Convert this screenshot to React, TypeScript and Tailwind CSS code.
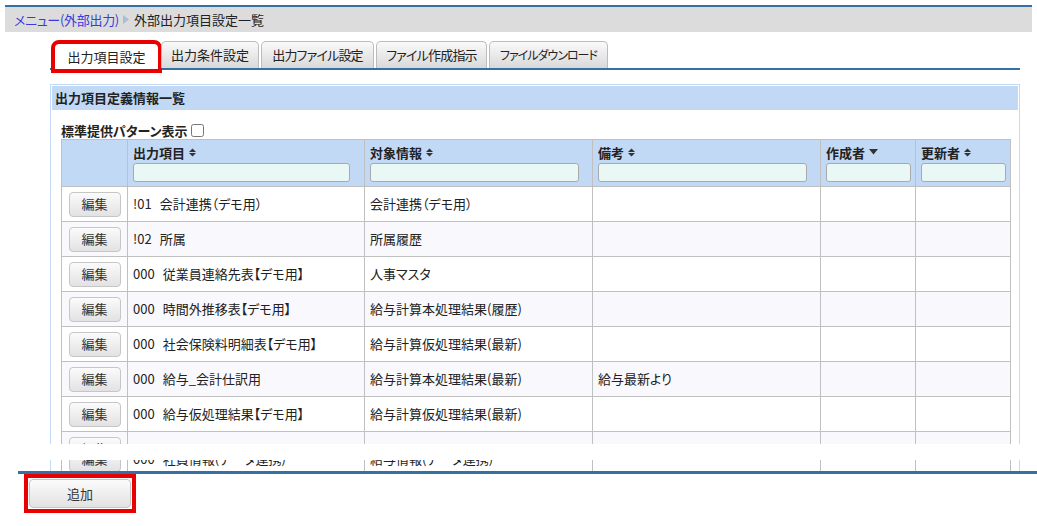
import React from "react";

const rows = [
  { code: "!01", name: "会計連携（デモ用）", target: "会計連携（デモ用）", note: "" },
  { code: "!02", name: "所属", target: "所属履歴", note: "" },
  { code: "000", name: "従業員連絡先表【デモ用】", target: "人事マスタ", note: "" },
  { code: "000", name: "時間外推移表【デモ用】", target: "給与計算本処理結果(履歴)", note: "" },
  { code: "000", name: "社会保険料明細表【デモ用】", target: "給与計算仮処理結果(最新)", note: "" },
  { code: "000", name: "給与_会計仕訳用", target: "給与計算本処理結果(最新)", note: "給与最新より" },
  { code: "000", name: "給与仮処理結果【デモ用】", target: "給与計算仮処理結果(最新)", note: "" },
  { code: "", name: "", target: "", note: "" },
];

const lastRow = { code: "000", name: "社員情報(データ連携)", target: "給与情報(データ連携)", note: "" };

const tabs = [
  { label: "出力項目設定", cls: "w-[105px]", active: true },
  { label: "出力条件設定", cls: "w-[98px]" },
  { label: "出力ファイル設定", cls: "w-[113px] tracking-[-0.8px]" },
  { label: "ファイル作成指示", cls: "w-[111px] tracking-[-0.8px]" },
  { label: "ファイルダウンロード", cls: "w-[119px] text-[12px] tracking-[-1px]" },
];

function SortIcon() {
  return (
    <svg width="7" height="9" viewBox="0 0 7 9" className="inline-block ml-[4px] mb-[1px]">
      <polygon points="0,4 3.5,0.5 7,4" fill="#333" />
      <polygon points="0,5 3.5,8.5 7,5" fill="#333" />
    </svg>
  );
}

function DownIcon() {
  return (
    <svg width="9" height="6" viewBox="0 0 9 6" className="inline-block ml-[4px] mb-[2px]">
      <polygon points="0,0 9,0 4.5,5.5" fill="#333" />
    </svg>
  );
}

function EditButton() {
  return (
    <button className="w-[52px] h-[25px] rounded-[4px] border border-[#c6c6c6] bg-gradient-to-b from-[#fbfbfb] to-[#e2e2e2] text-[13px] text-[#333]">
      編集
    </button>
  );
}

function HeaderCell({ label, icon, inputW }: { label: string; icon: React.ReactNode; inputW: string }) {
  return (
    <th className="border border-[#c0c0c0] bg-[#c2d9f6] align-top text-left font-bold pl-[5px] pt-[4px]">
      <div className="h-[17px] leading-[17px] flex items-center">
        {label}
        {icon}
      </div>
      <input
        type="text"
        className={`${inputW} h-[19px] mt-[2px] block rounded-[3px] border border-[#a9a9a9] bg-[#e9f8f5]`}
      />
    </th>
  );
}

function Row({ r, i }: { r: (typeof rows)[number]; i: number }) {
  return (
    <tr className={`h-[35px] ${i % 2 === 1 ? "bg-[#f8f8fd]" : "bg-white"}`}>
      <td className="border border-[#c0c0c0] text-center">
        <EditButton />
      </td>
      <td className="border border-[#c0c0c0] pl-[5px] whitespace-nowrap">
        {r.code}
        <span className="ml-[8px]">{r.name}</span>
      </td>
      <td className="border border-[#c0c0c0] pl-[5px] whitespace-nowrap">{r.target}</td>
      <td className="border border-[#c0c0c0] pl-[5px] whitespace-nowrap">{r.note}</td>
      <td className="border border-[#c0c0c0]"></td>
      <td className="border border-[#c0c0c0]"></td>
    </tr>
  );
}

function Cols() {
  return (
    <colgroup>
      <col className="w-[66px]" />
      <col className="w-[237px]" />
      <col className="w-[228px]" />
      <col className="w-[228px]" />
      <col className="w-[95px]" />
      <col className="w-[95px]" />
    </colgroup>
  );
}

export default function App() {
  return (
    <div className="w-[1037px] h-[526px] overflow-hidden bg-white text-[13px] text-[#222] font-['Noto_Sans_CJK_JP',sans-serif] [font-feature-settings:'palt']">
      {/* breadcrumb */}
      <div className="mx-[5px] mt-[5px] border-t-2 border-[#3470a4] bg-[#dcdcdc] h-[27px] flex items-center pl-[9px]">
        <a className="text-[#3a3adf] tracking-[-0.3px]">メニュー(外部出力)</a>
        <svg width="6" height="9" viewBox="0 0 6 9" className="ml-[4px] mr-[5px]">
          <polygon points="0,0 6,4.5 0,9" fill="#a9bdd8" />
        </svg>
        <span>外部出力項目設定一覧</span>
      </div>

      {/* tabs */}
      <div className="ml-[50px] w-[970px] mt-[9px] border-b-2 border-[#3470a4] flex items-end gap-[2px] pl-[4px]">
        {tabs.map((t) =>
          t.active ? (
            <div
              key={t.label}
              className={`${t.cls} h-[27px] -mb-[2px] flex items-center justify-center rounded-t-[5px] border border-b-0 border-[#b8b8b8] bg-white outline-[4px] outline-solid outline-[#ea0000] outline-offset-[-1px]`}
            >
              {t.label}
            </div>
          ) : (
            <div
              key={t.label}
              className={`${t.cls} h-[27px] flex items-center justify-center rounded-t-[5px] border border-b-0 border-[#bcbcbc] bg-gradient-to-b from-[#fafafa] to-[#d9d9d9]`}
            >
              {t.label}
            </div>
          )
        )}
      </div>

      {/* panel */}
      <div className="ml-[50px] w-[970px] mt-[14px] h-[360px] overflow-hidden border border-b-0 border-[#c3d9f5] p-[1px]">
        <div className="h-[24px] bg-[#c2d9f6] font-bold pl-[3px] flex items-center">出力項目定義情報一覧</div>
        <div className="pl-[9px] pt-[13px] h-[29px] leading-[16px] font-bold flex items-start">
          標準提供パターン表示
          <input type="checkbox" className="w-[13px] h-[13px] ml-[3px] mt-[1px]" />
        </div>
        <table className="ml-[9px] border-collapse table-fixed w-[949px]">
          <Cols />
          <thead>
            <tr className="h-[47px]">
              <th className="border border-[#c0c0c0] bg-[#c2d9f6]"></th>
              <HeaderCell label="出力項目" icon={<SortIcon />} inputW="w-[217px]" />
              <HeaderCell label="対象情報" icon={<SortIcon />} inputW="w-[209px]" />
              <HeaderCell label="備考" icon={<SortIcon />} inputW="w-[209px]" />
              <HeaderCell label="作成者" icon={<DownIcon />} inputW="w-[85px]" />
              <HeaderCell label="更新者" icon={<SortIcon />} inputW="w-[85px]" />
            </tr>
          </thead>
          <tbody>
            {rows.map((r, i) => (
              <Row key={i} r={r} i={i} />
            ))}
          </tbody>
        </table>
      </div>

      {/* clipped strip of the next row */}
      <div className="ml-[50px] w-[970px] mt-[16px] h-[11px] overflow-hidden border-x border-[#c3d9f5] px-[1px]">
        <table className="ml-[9px] -mt-[19px] border-collapse table-fixed w-[949px]">
          <Cols />
          <tbody>
            <Row r={lastRow} i={0} />
          </tbody>
        </table>
      </div>

      <div className="ml-[18px] h-[3px] bg-[#3470a4]" />

      {/* add button */}
      <div className="ml-[24px] w-[112px] h-[39px] border-4 border-[#ea0000] p-[1px]">
        <button className="w-[102px] h-[29px] rounded-[4px] border border-[#c6c6c6] bg-gradient-to-b from-[#fbfbfb] to-[#e2e2e2] text-[13px] text-[#333]">
          追加
        </button>
      </div>
    </div>
  );
}
